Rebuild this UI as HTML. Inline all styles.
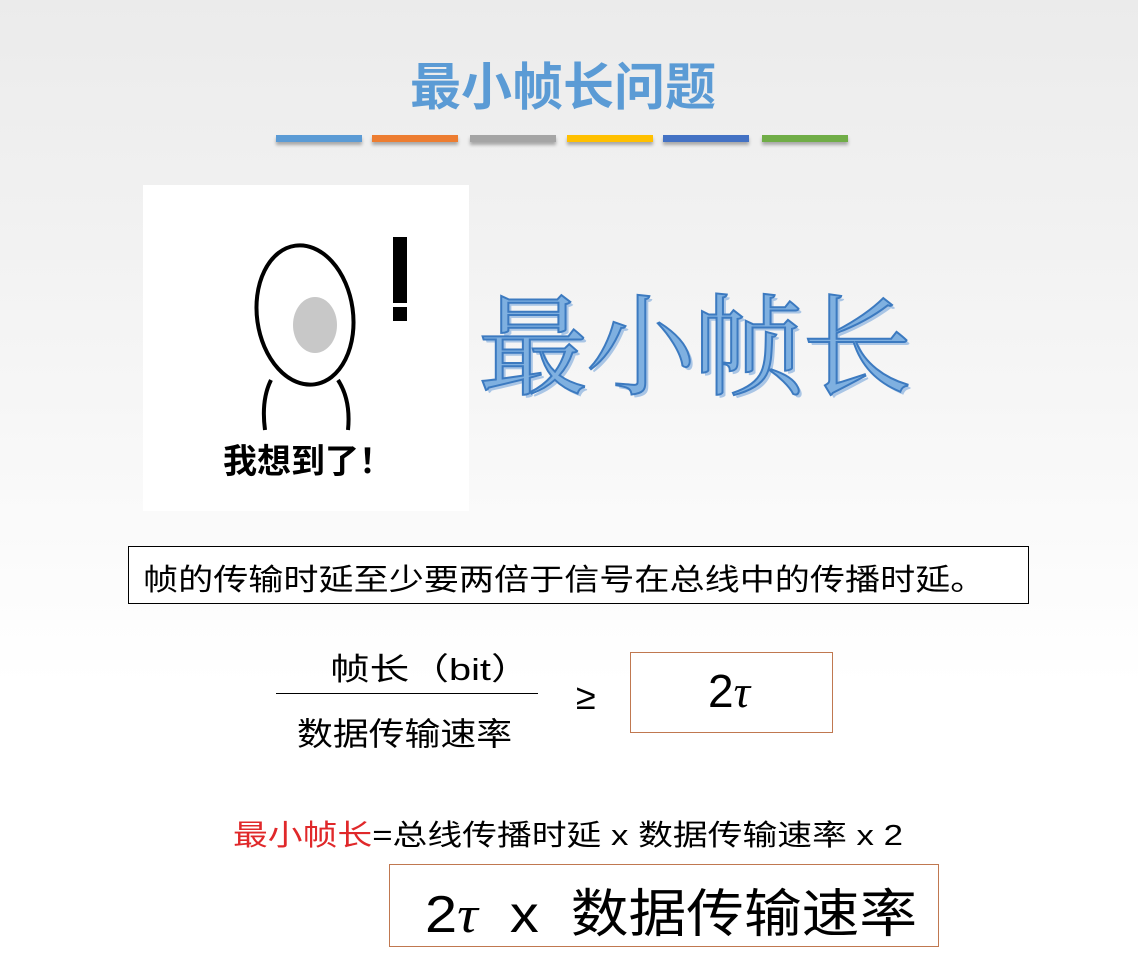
<!DOCTYPE html><html><head><meta charset="utf-8"><style>
body{margin:0;width:1138px;height:979px;overflow:hidden;background:linear-gradient(#ebebeb,#f6f6f6 40%,#fff 70%);font-family:"Liberation Sans","Noto Sans CJK SC",sans-serif;position:relative}
.a{position:absolute;white-space:nowrap;transform-origin:0 0}
.bar{position:absolute;top:135px;height:7px;width:86px;box-shadow:0 3px 3px rgba(0,0,0,.3)}
</style></head><body>
<div class="a" style="left:410px;top:46px;font:bold 51px 'Noto Sans CJK SC',sans-serif;color:#5b9bd5">最小帧长问题</div>
<div class="bar" style="left:276px;background:#5b9bd5"></div>
<div class="bar" style="left:372px;background:#ed7d31"></div>
<div class="bar" style="left:470px;background:#a5a5a5"></div>
<div class="bar" style="left:567px;background:#ffc000"></div>
<div class="bar" style="left:663px;background:#4472c4"></div>
<div class="bar" style="left:762px;background:#70ad47"></div>
<div class="a" style="left:143px;top:185px;width:326px;height:326px;background:#fff"></div>
<svg class="a" style="left:143px;top:185px" width="326" height="326">
<ellipse cx="162" cy="130" rx="48" ry="70" fill="#fff" stroke="#000" stroke-width="4" transform="rotate(-8 162 130)"/>
<ellipse cx="172" cy="140" rx="22" ry="28" fill="#c8c8c8"/>
<path d="M128 195 Q118 215 122 245 M195 195 Q208 215 205 245" stroke="#000" stroke-width="4" fill="none"/>
<rect x="250" y="52" width="14" height="66" fill="#000"/><rect x="250" y="122" width="14" height="14" fill="#000"/>
<text x="80" y="288" font-family="Noto Sans CJK SC,sans-serif" font-weight="bold" font-size="34" fill="#000">我想到了！</text>
</svg>
<div class="a" style="left:478px;top:260px;font:110px 'Noto Serif CJK SC',serif;color:#7fb0e0;-webkit-text-stroke:2px #3c7ac0;text-shadow:3px 3px 0 #a9c5e5;letter-spacing:-2px">最小帧长</div>
<div class="a" style="left:128px;top:546px;width:899px;height:56px;border:1px solid #000;background:#fff"></div>
<div class="a" style="left:143px;top:555px;font-size:30px;color:#000;transform:scaleX(1.17)">帧的传输时延至少要两倍于信号在总线中的传播时延。</div>
<div class="a" style="left:330px;top:644px;font-size:31px;transform:scaleX(1.28)">帧长（bit）</div>
<div class="a" style="left:276px;top:693px;width:262px;height:1px;background:#000"></div>
<div class="a" style="left:297px;top:709px;font-size:32px;transform:scaleX(1.12)">数据传输速率</div>
<div class="a" style="left:576px;top:676px;font-size:36px">≥</div>
<div class="a" style="left:630px;top:652px;width:201px;height:79px;border:1px solid #c07850;background:#fff"></div>
<div class="a" style="left:708px;top:664px;font:46px 'Liberation Sans',sans-serif">2<i style="font-family:'Liberation Serif',serif">τ</i></div>
<div class="a" style="left:233px;top:812px;font-size:29px;transform:scaleX(1.2)"><span style="color:#e0282a">最小帧长</span>=总线传播时延 x 数据传输速率 x 2</div>
<div class="a" style="left:389px;top:864px;width:548px;height:81px;border:1px solid #c07850;background:#fff"></div>
<div class="a" style="left:425px;top:872px;font-size:52px;transform:scaleX(1.11)">2<i style="font-family:'Liberation Serif',serif">τ</i>&nbsp;&nbsp;x&nbsp;&nbsp;数据传输速率</div>
</body></html>
